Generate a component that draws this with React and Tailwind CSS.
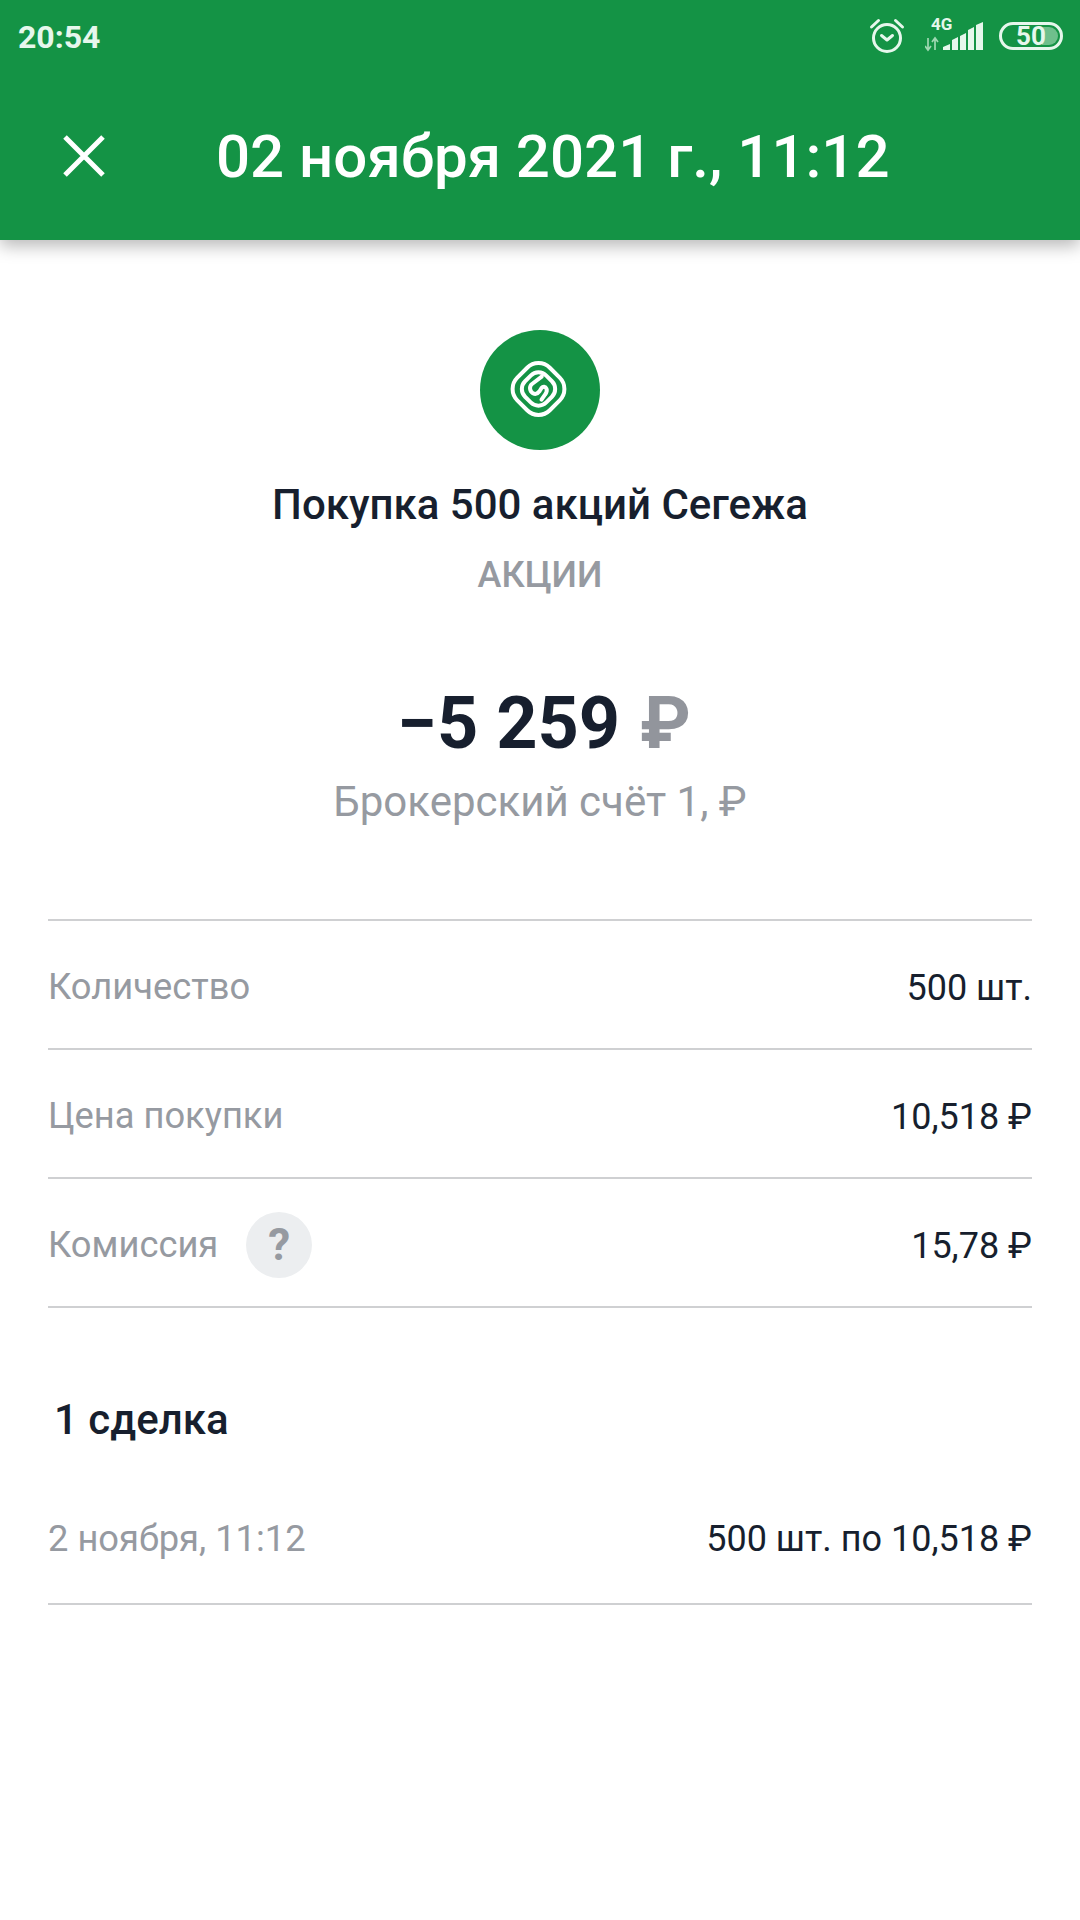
const rows = [
  { label: "Количество", value: "500 шт." },
  { label: "Цена покупки", value: "10,518 ₽" },
  { label: "Комиссия", value: "15,78 ₽", help: true },
];

function Alarm() {
  return (
    <svg width="36" height="40" viewBox="0 0 36 40" fill="none" stroke="#e6f7ec" strokeWidth="3" strokeLinecap="round" strokeLinejoin="round">
      <circle cx="18" cy="22" r="13.500" />
      <path d="M12.500 19.500l5.500 4.500 5.500-4.500" />
      <path d="M2.500 11l7-6.500M33.500 11l-7-6.500" />
    </svg>
  );
}

function Signal() {
  return (
    <svg width="58" height="40" viewBox="0 0 58 40" fill="#e6f7ec">
      <path d="M18 34v-3l7-3v6zM27 34v-10l6-3v13zM35 34v-14l6-3v17zM43 34v-20l6-3v23zM51 34v-25l7-3v28z" />
      <path d="M3 22v12M0 30l3 4 3-4M10 34v-12M7 26l3-4 3 4" stroke="#9fd8b2" strokeWidth="1.700" fill="none" />
    </svg>
  );
}

function Logo() {
  return (
    <svg width="60" height="60" viewBox="0 0 60 60" fill="none" stroke="#fff" strokeWidth="4" strokeLinecap="round" strokeLinejoin="round">
      <rect x="5.500" y="6" width="46" height="46" rx="16" transform="rotate(45 28.500 29)" />
      <rect x="13.500" y="14" width="30" height="30" rx="11" transform="rotate(45 28.500 29)" />
      <path d="M31.700 16.700L22 24c-3 2.500-2.500 7 1 9.300 2.500 1.500 5 0 6.500-2l2-3.300c1.500-2 4-1.800 5 .7 1 2.500 0 4-1.500 6l-3.500 5" />
    </svg>
  );
}

export default function App() {
  return (
    <div className="relative w-[1080px] h-[1920px] bg-white overflow-hidden font-['Roboto',sans-serif]">
      <header className="relative z-10 h-[240px] bg-[#149345] shadow-[0_6px_16px_rgba(0,0,0,0.28)]">
        <div className="flex items-center justify-between h-[72px] pl-[18px] pr-[17px]">
          <span className="pt-[2px] text-[32px] font-bold text-[#e6f7ec] leading-none">20:54</span>
          <div className="flex items-center">
            <Alarm />
            <div className="relative ml-[20px] mr-[16px] w-[58px] h-[40px]">
              <Signal />
              <span className="absolute left-[6px] top-[0px] text-[17px] font-bold leading-none text-[#e6f7ec]">4G</span>
            </div>
            <div className="relative w-[64px] h-[28px] rounded-full border-[3px] border-[#e6f7ec] overflow-hidden flex items-center justify-center">
              <div className="absolute right-[2px] top-[2px] bottom-[2px] w-[16px] rounded-r-full bg-[#6fbf8c]" />
              <span className="relative text-[26px] font-bold leading-none text-[#e6f7ec]">50</span>
            </div>
          </div>
        </div>
        <div className="flex items-center h-[172px] pb-[4px] pl-[63px]">
          <svg width="42" height="42" viewBox="0 0 42 42" stroke="#fff" strokeWidth="5" fill="none">
            <path d="M2 2l38 38M40 2L2 40" />
          </svg>
          <h1 className="ml-[111px] mt-[2px] text-[60px] font-medium leading-none text-white whitespace-nowrap">02 ноября 2021 г., 11:12</h1>
        </div>
      </header>

      <main className="flex flex-col items-center">
        <div className="mt-[90px] w-[120px] h-[120px] rounded-full bg-[#149345] flex items-center justify-center">
          <Logo />
        </div>
        <div className="mt-[30px] text-[42px] font-medium leading-[50px] text-[#171f2e]">Покупка 500 акций Сегежа</div>
        <div className="mt-[23px] text-[36px] font-medium leading-[44px] text-[#969aa1]">АКЦИИ</div>
        <div className="mt-[85px] pl-[8px] text-[72px] font-bold leading-[84px] text-[#171f2e]">
          −5 259 <span className="ml-[2px] text-[#92959c]">₽</span>
        </div>
        <div className="mt-[11px] text-[42px] leading-[50px] text-[#969aa1]">Брокерский счёт 1, ₽</div>

        <div className="mt-[92px] w-[984px] border-t-2 border-[#cfd0d2]">
          {rows.map((r) => (
            <div key={r.label} className="flex items-center justify-between h-[129px] pt-[6px] border-b-2 border-[#cfd0d2]">
              <div className="flex items-center">
                <span className="text-[36.300px] text-[#969aa1]">{r.label}</span>
                {r.help && (
                  <span className="ml-[28px] mb-[2px] w-[66px] h-[66px] rounded-full bg-[#eceef0] flex items-center justify-center text-[44px] font-bold text-[#969aa1]">?</span>
                )}
              </div>
              <span className="text-[36px] text-[#171f2e]">{r.value}</span>
            </div>
          ))}
        </div>

        <div className="mt-[87px] w-[984px] pl-[6px] text-[42px] font-medium leading-[50px] text-[#171f2e]">1 сделка</div>

        <div className="mt-[25px] w-[984px] h-[135px] pt-[5px] flex items-center justify-between border-b-2 border-[#cfd0d2]">
          <span className="text-[36.300px] text-[#969aa1]">2 ноября, 11:12</span>
          <span className="text-[36px] text-[#171f2e]">500 шт. по 10,518 ₽</span>
        </div>
      </main>
    </div>
  );
}
